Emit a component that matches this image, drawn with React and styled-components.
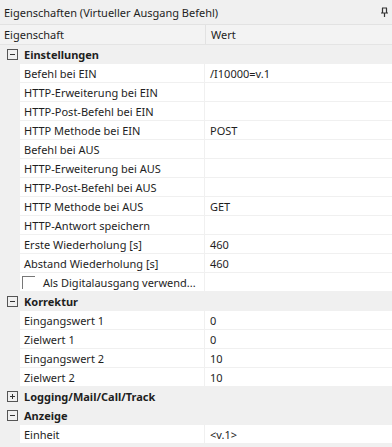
import React from "react";
import styled, { createGlobalStyle } from "styled-components";

const GlobalStyle = createGlobalStyle`
  html, body {
    margin: 0;
    padding: 0;
    background: #f0f0f0;
  }
  body {
    font-family: "Noto Sans", "Liberation Sans", sans-serif;
    font-size: 11px;
    color: #1e1e1e;
  }
`;

const sections = [
  {
    title: "Einstellungen",
    open: true,
    rows: [
      ["Befehl bei EIN", "/I10000=v.1"],
      ["HTTP-Erweiterung bei EIN", ""],
      ["HTTP-Post-Befehl bei EIN", ""],
      ["HTTP Methode bei EIN", "POST"],
      ["Befehl bei AUS", ""],
      ["HTTP-Erweiterung bei AUS", ""],
      ["HTTP-Post-Befehl bei AUS", ""],
      ["HTTP Methode bei AUS", "GET"],
      ["HTTP-Antwort speichern", ""],
      ["Erste Wiederholung [s]", "460"],
      ["Abstand Wiederholung [s]", "460"],
      ["Als Digitalausgang verwend...", "", true],
    ],
  },
  {
    title: "Korrektur",
    open: true,
    rows: [
      ["Eingangswert 1", "0"],
      ["Zielwert 1", "0"],
      ["Eingangswert 2", "10"],
      ["Zielwert 2", "10"],
    ],
  },
  { title: "Logging/Mail/Call/Track", open: false, rows: [] },
  {
    title: "Anzeige",
    open: true,
    rows: [["Einheit", "<v.1>"]],
  },
];

const PinIcon = () => (
  <svg width="9" height="11" viewBox="0 0 9 11">
    <path d="M2 1h5M2.5 1v5M6.5 1v5M1 6h7M4.5 6v4" stroke="#333" strokeWidth="1.2" fill="none" />
  </svg>
);

const Expander = ({ open }) => (
  <svg width="11" height="11" viewBox="0 0 11 11">
    <rect x="0.5" y="0.5" width="10" height="10" fill="none" stroke="#555" />
    <path d="M3 5.5h5" stroke="#333" />
    {!open && <path d="M5.5 3v5" stroke="#333" />}
  </svg>
);

export default function App() {
  return (
    <>
      <GlobalStyle />
      <Panel>
        <TitleBar>
          <span>Eigenschaften (Virtueller Ausgang Befehl)</span>
          <PinIcon />
        </TitleBar>
        <HeaderRow>
          <HeaderCell>Eigenschaft</HeaderCell>
          <HeaderCell $value>Wert</HeaderCell>
        </HeaderRow>
        <Grid>
          {sections.map((s) => (
            <React.Fragment key={s.title}>
              <GroupRow>
                <Expander open={s.open} />
                <GroupTitle>{s.title}</GroupTitle>
              </GroupRow>
              {s.rows.map(([label, value, check]) => (
                <Row key={label}>
                  <Indent />
                  <LabelCell>
                    {check && <Checkbox />}
                    {label}
                  </LabelCell>
                  <ValueCell>{value}</ValueCell>
                </Row>
              ))}
            </React.Fragment>
          ))}
        </Grid>
      </Panel>
    </>
  );
}

const Panel = styled.div`
  width: 392px;
  height: 447px;
  overflow: hidden;
  background: #f0f0f0;
`;

const TitleBar = styled.div`
  height: 24px;
  display: flex;
  align-items: center;
  justify-content: space-between;
  padding: 0 3px 0 4px;
  border-bottom: 1px solid #e2e2e2;
  background: #f0f0f0;
`;

const HeaderRow = styled.div`
  height: 19px;
  display: grid;
  grid-template-columns: 205px 1fr;
  background: #f3f3f3;
  border-bottom: 1px solid #e4e4e4;
`;

const HeaderCell = styled.div`
  display: flex;
  align-items: center;
  padding-left: ${(p) => (p.$value ? "5px" : "4px")};
  border-left: ${(p) => (p.$value ? "1px solid #e2e2e2" : "none")};
`;

const Grid = styled.div`
  display: flex;
  flex-direction: column;
`;

const GroupRow = styled.div`
  height: 19px;
  display: flex;
  align-items: center;
  gap: 6px;
  padding-left: 7px;
  background: #f0f0f0;
`;

const GroupTitle = styled.span`
  font-weight: 700;
`;

const Row = styled.div`
  height: 19px;
  display: grid;
  grid-template-columns: 20px 185px 1fr;
`;

const Indent = styled.div`
  background: #f0f0f0;
`;

const LabelCell = styled.div`
  display: flex;
  align-items: center;
  padding-left: 4px;
  background: #fff;
  border-bottom: 1px solid #f0f0f0;
  border-right: 1px solid #f0f0f0;
  white-space: nowrap;
  overflow: hidden;
`;

const ValueCell = styled.div`
  display: flex;
  align-items: center;
  padding-left: 5px;
  background: #fff;
  border-bottom: 1px solid #f0f0f0;
`;

const Checkbox = styled.span`
  flex-shrink: 0;
  width: 13px;
  height: 13px;
  margin: 0 8px 0 -2px;
  border-left: 1px solid #777;
  border-top: 1px solid #777;
  box-sizing: border-box;
`;
